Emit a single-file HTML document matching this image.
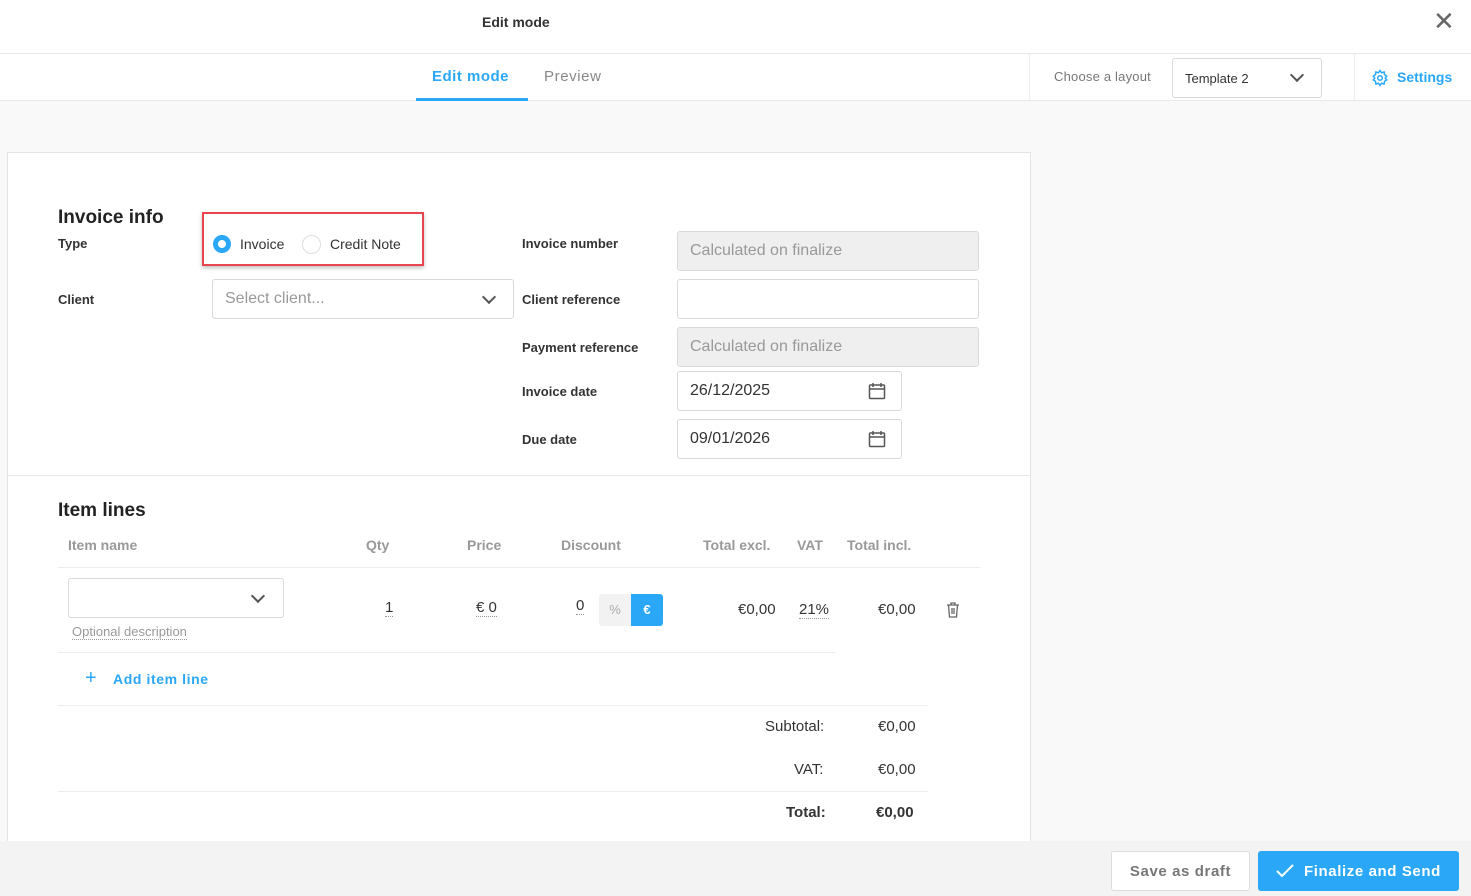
<!DOCTYPE html>
<html><head><meta charset="utf-8"><style>
*{box-sizing:border-box;margin:0;padding:0}
body{width:1471px;height:896px;overflow:hidden;background:#f9f9f9;font-family:"Liberation Sans",sans-serif;color:#333;position:relative}
.a{position:absolute}
.lbl{font-size:13px;font-weight:bold;color:#333}
.inp{position:absolute;border:1px solid #d9d9d9;border-radius:3px;background:#fff;font-size:16px;color:#999;padding-left:12px;display:flex;align-items:center}
.dis{background:#efefef}
.hd{font-size:14px;font-weight:bold;color:#999;position:absolute;top:537px}
.chev{position:absolute;width:10px;height:10px;border-right:2px solid #555;border-bottom:2px solid #555;transform:rotate(45deg)}
.num{position:absolute;font-size:15px;color:#333}
</style></head><body>
<div class="a" style="left:0;top:0;width:1471px;height:54px;background:#fff;border-bottom:1px solid #e8e8e8"></div>
<div class="a" style="left:482px;top:14px;font-size:14px;font-weight:bold;color:#333">Edit mode</div>
<div class="a" style="left:1433px;top:6px;font-size:26px;color:#666">✕</div>
<div class="a" style="left:0;top:54px;width:1471px;height:47px;background:#fff;border-bottom:1px solid #e8e8e8"></div>
<div class="a" style="left:432px;top:68px;font-size:15px;font-weight:bold;color:#2aa8f7;letter-spacing:.5px">Edit mode</div>
<div class="a" style="left:416px;top:98px;width:112px;height:3px;background:#2aa8f7"></div>
<div class="a" style="left:544px;top:68px;font-size:15px;color:#888;letter-spacing:.6px">Preview</div>
<div class="a" style="left:1029px;top:54px;width:1px;height:47px;background:#eee"></div>
<div class="a" style="left:1054px;top:69px;font-size:13px;color:#777;letter-spacing:.2px">Choose a layout</div>
<div class="inp" style="left:1172px;top:58px;width:150px;height:40px;color:#333;font-size:13px">Template 2</div>
<div class="chev" style="left:1292px;top:70px"></div>
<div class="a" style="left:1354px;top:54px;width:1px;height:47px;background:#eee"></div>
<svg class="a" style="left:1371px;top:69px" width="18" height="18" viewBox="0 0 24 24" fill="none" stroke="#2aa8f7" stroke-width="2"><circle cx="12" cy="12" r="3"/><path d="M12 2l2 3 3.5-1 .5 3.5 3 2-2 2.5 2 2.5-3 2-.5 3.5-3.5-1-2 3-2-3-3.5 1-.5-3.5-3-2 2-2.5-2-2.5 3-2L6.5 4 10 5z"/></svg>
<div class="a" style="left:1397px;top:69px;font-size:14px;font-weight:bold;color:#2aa8f7">Settings</div>

<div class="a" style="left:7px;top:152px;width:1024px;height:700px;background:#fff;border:1px solid #e4e4e4"></div>
<div class="a" style="left:58px;top:207px;font-size:19px;font-weight:bold;color:#222">Invoice info</div>
<div class="a lbl" style="left:58px;top:236px">Type</div>
<div class="a" style="left:202px;top:212px;width:222px;height:54px;border:2px solid #e8454f;box-shadow:0 2px 4px rgba(0,0,0,.25)"></div>
<div class="a" style="left:213px;top:235px;width:18px;height:18px;border-radius:50%;border:5px solid #2aa8f7;background:#fff"></div>
<div class="a" style="left:240px;top:236px;font-size:14px">Invoice</div>
<div class="a" style="left:302px;top:235px;width:19px;height:19px;border-radius:50%;border:1px solid #ddd"></div>
<div class="a" style="left:330px;top:236px;font-size:14px">Credit Note</div>
<div class="a lbl" style="left:58px;top:292px">Client</div>
<div class="inp" style="left:212px;top:279px;width:302px;height:40px">Select client...</div>
<div class="chev" style="left:484px;top:292px"></div>

<div class="a lbl" style="left:522px;top:236px">Invoice number</div>
<div class="inp dis" style="left:677px;top:231px;width:302px;height:40px">Calculated on finalize</div>
<div class="a lbl" style="left:522px;top:292px">Client reference</div>
<div class="inp" style="left:677px;top:279px;width:302px;height:40px"></div>
<div class="a lbl" style="left:522px;top:340px">Payment reference</div>
<div class="inp dis" style="left:677px;top:327px;width:302px;height:40px">Calculated on finalize</div>
<div class="a lbl" style="left:522px;top:384px">Invoice date</div>
<div class="inp" style="left:677px;top:371px;width:225px;height:40px;color:#333">26/12/2025</div>
<div class="a lbl" style="left:522px;top:432px">Due date</div>
<div class="inp" style="left:677px;top:419px;width:225px;height:40px;color:#333">09/01/2026</div>
<svg class="a" style="left:868px;top:382px" width="18" height="18" viewBox="0 0 18 18" fill="none" stroke="#555" stroke-width="1.5"><rect x="1.5" y="3" width="15" height="13.5" rx="1"/><path d="M1.5 7h15M5 1v4M13 1v4"/></svg>
<svg class="a" style="left:868px;top:430px" width="18" height="18" viewBox="0 0 18 18" fill="none" stroke="#555" stroke-width="1.5"><rect x="1.5" y="3" width="15" height="13.5" rx="1"/><path d="M1.5 7h15M5 1v4M13 1v4"/></svg>
<div class="a" style="left:8px;top:475px;width:1022px;height:1px;background:#e8e8e8"></div>

<div class="a" style="left:58px;top:500px;font-size:19px;font-weight:bold;color:#222">Item lines</div>
<div class="hd" style="left:68px">Item name</div>
<div class="hd" style="left:366px">Qty</div>
<div class="hd" style="left:467px">Price</div>
<div class="hd" style="left:561px">Discount</div>
<div class="hd" style="left:703px">Total excl.</div>
<div class="hd" style="left:797px">VAT</div>
<div class="hd" style="left:847px">Total incl.</div>
<div class="a" style="left:58px;top:567px;width:922px;height:1px;background:#eee"></div>
<div class="inp" style="left:68px;top:578px;width:216px;height:40px"></div>
<div class="chev" style="left:253px;top:591px"></div>
<div class="a" style="left:72px;top:624px;font-size:13px;color:#999;border-bottom:1px dotted #999">Optional description</div>
<div class="num" style="left:385px;top:599px;border-bottom:1px dotted #999">1</div>
<div class="num" style="left:476px;top:599px;border-bottom:1px dotted #999">€ 0</div>
<div class="num" style="left:576px;top:597px;border-bottom:1px dotted #999">0</div>
<div class="a" style="left:599px;top:594px;width:32px;height:32px;background:#f2f2f2;border-radius:3px 0 0 3px;color:#aaa;font-size:13px;text-align:center;line-height:32px">%</div>
<div class="a" style="left:631px;top:594px;width:32px;height:32px;background:#2aa8f7;border-radius:0 3px 3px 0;color:#fff;font-size:13px;font-weight:bold;text-align:center;line-height:32px">€</div>
<div class="num" style="left:738px;top:601px">€0,00</div>
<div class="num" style="left:799px;top:601px;border-bottom:1px dotted #999">21%</div>
<div class="num" style="left:878px;top:601px">€0,00</div>
<svg class="a" style="left:946px;top:602px" width="14" height="16" viewBox="0 0 14 16" fill="none" stroke="#666" stroke-width="1.3"><path d="M1 3h12M5 3V1h4v2M2.5 3l1 12h7l1-12M6 6v6M8 6v6"/></svg>
<div class="a" style="left:58px;top:652px;width:778px;height:1px;background:#eee"></div>
<div class="a" style="left:85px;top:668px;font-size:20px;color:#2aa8f7;line-height:20px">+</div>
<div class="a" style="left:113px;top:671px;font-size:14px;font-weight:bold;color:#2aa8f7;letter-spacing:.6px">Add item line</div>
<div class="a" style="left:58px;top:705px;width:870px;height:1px;background:#eee"></div>
<div class="num" style="left:765px;top:718px">Subtotal:</div>
<div class="num" style="left:878px;top:718px">€0,00</div>
<div class="num" style="left:794px;top:761px">VAT:</div>
<div class="num" style="left:878px;top:761px">€0,00</div>
<div class="a" style="left:58px;top:791px;width:870px;height:1px;background:#eee"></div>
<div class="num" style="left:786px;top:804px;font-weight:bold">Total:</div>
<div class="num" style="left:876px;top:804px;font-weight:bold">€0,00</div>

<div class="a" style="left:0;top:841px;width:1471px;height:55px;background:#f3f3f3"></div>
<div class="a" style="left:1111px;top:851px;width:139px;height:40px;background:#fff;border:1px solid #ddd;border-radius:3px;font-size:15px;font-weight:bold;color:#777;text-align:center;line-height:39px;letter-spacing:.6px">Save as draft</div>
<div class="a" style="left:1258px;top:851px;width:201px;height:40px;background:#2aa8f7;border-radius:3px;font-size:15px;font-weight:bold;color:#fff;line-height:41px;padding-left:46px;letter-spacing:.6px">Finalize and Send</div>
<svg class="a" style="left:1276px;top:864px" width="18" height="14" viewBox="0 0 18 14" fill="none" stroke="#fff" stroke-width="2"><path d="M1 7l5 5L17 1"/></svg>
</body></html>
